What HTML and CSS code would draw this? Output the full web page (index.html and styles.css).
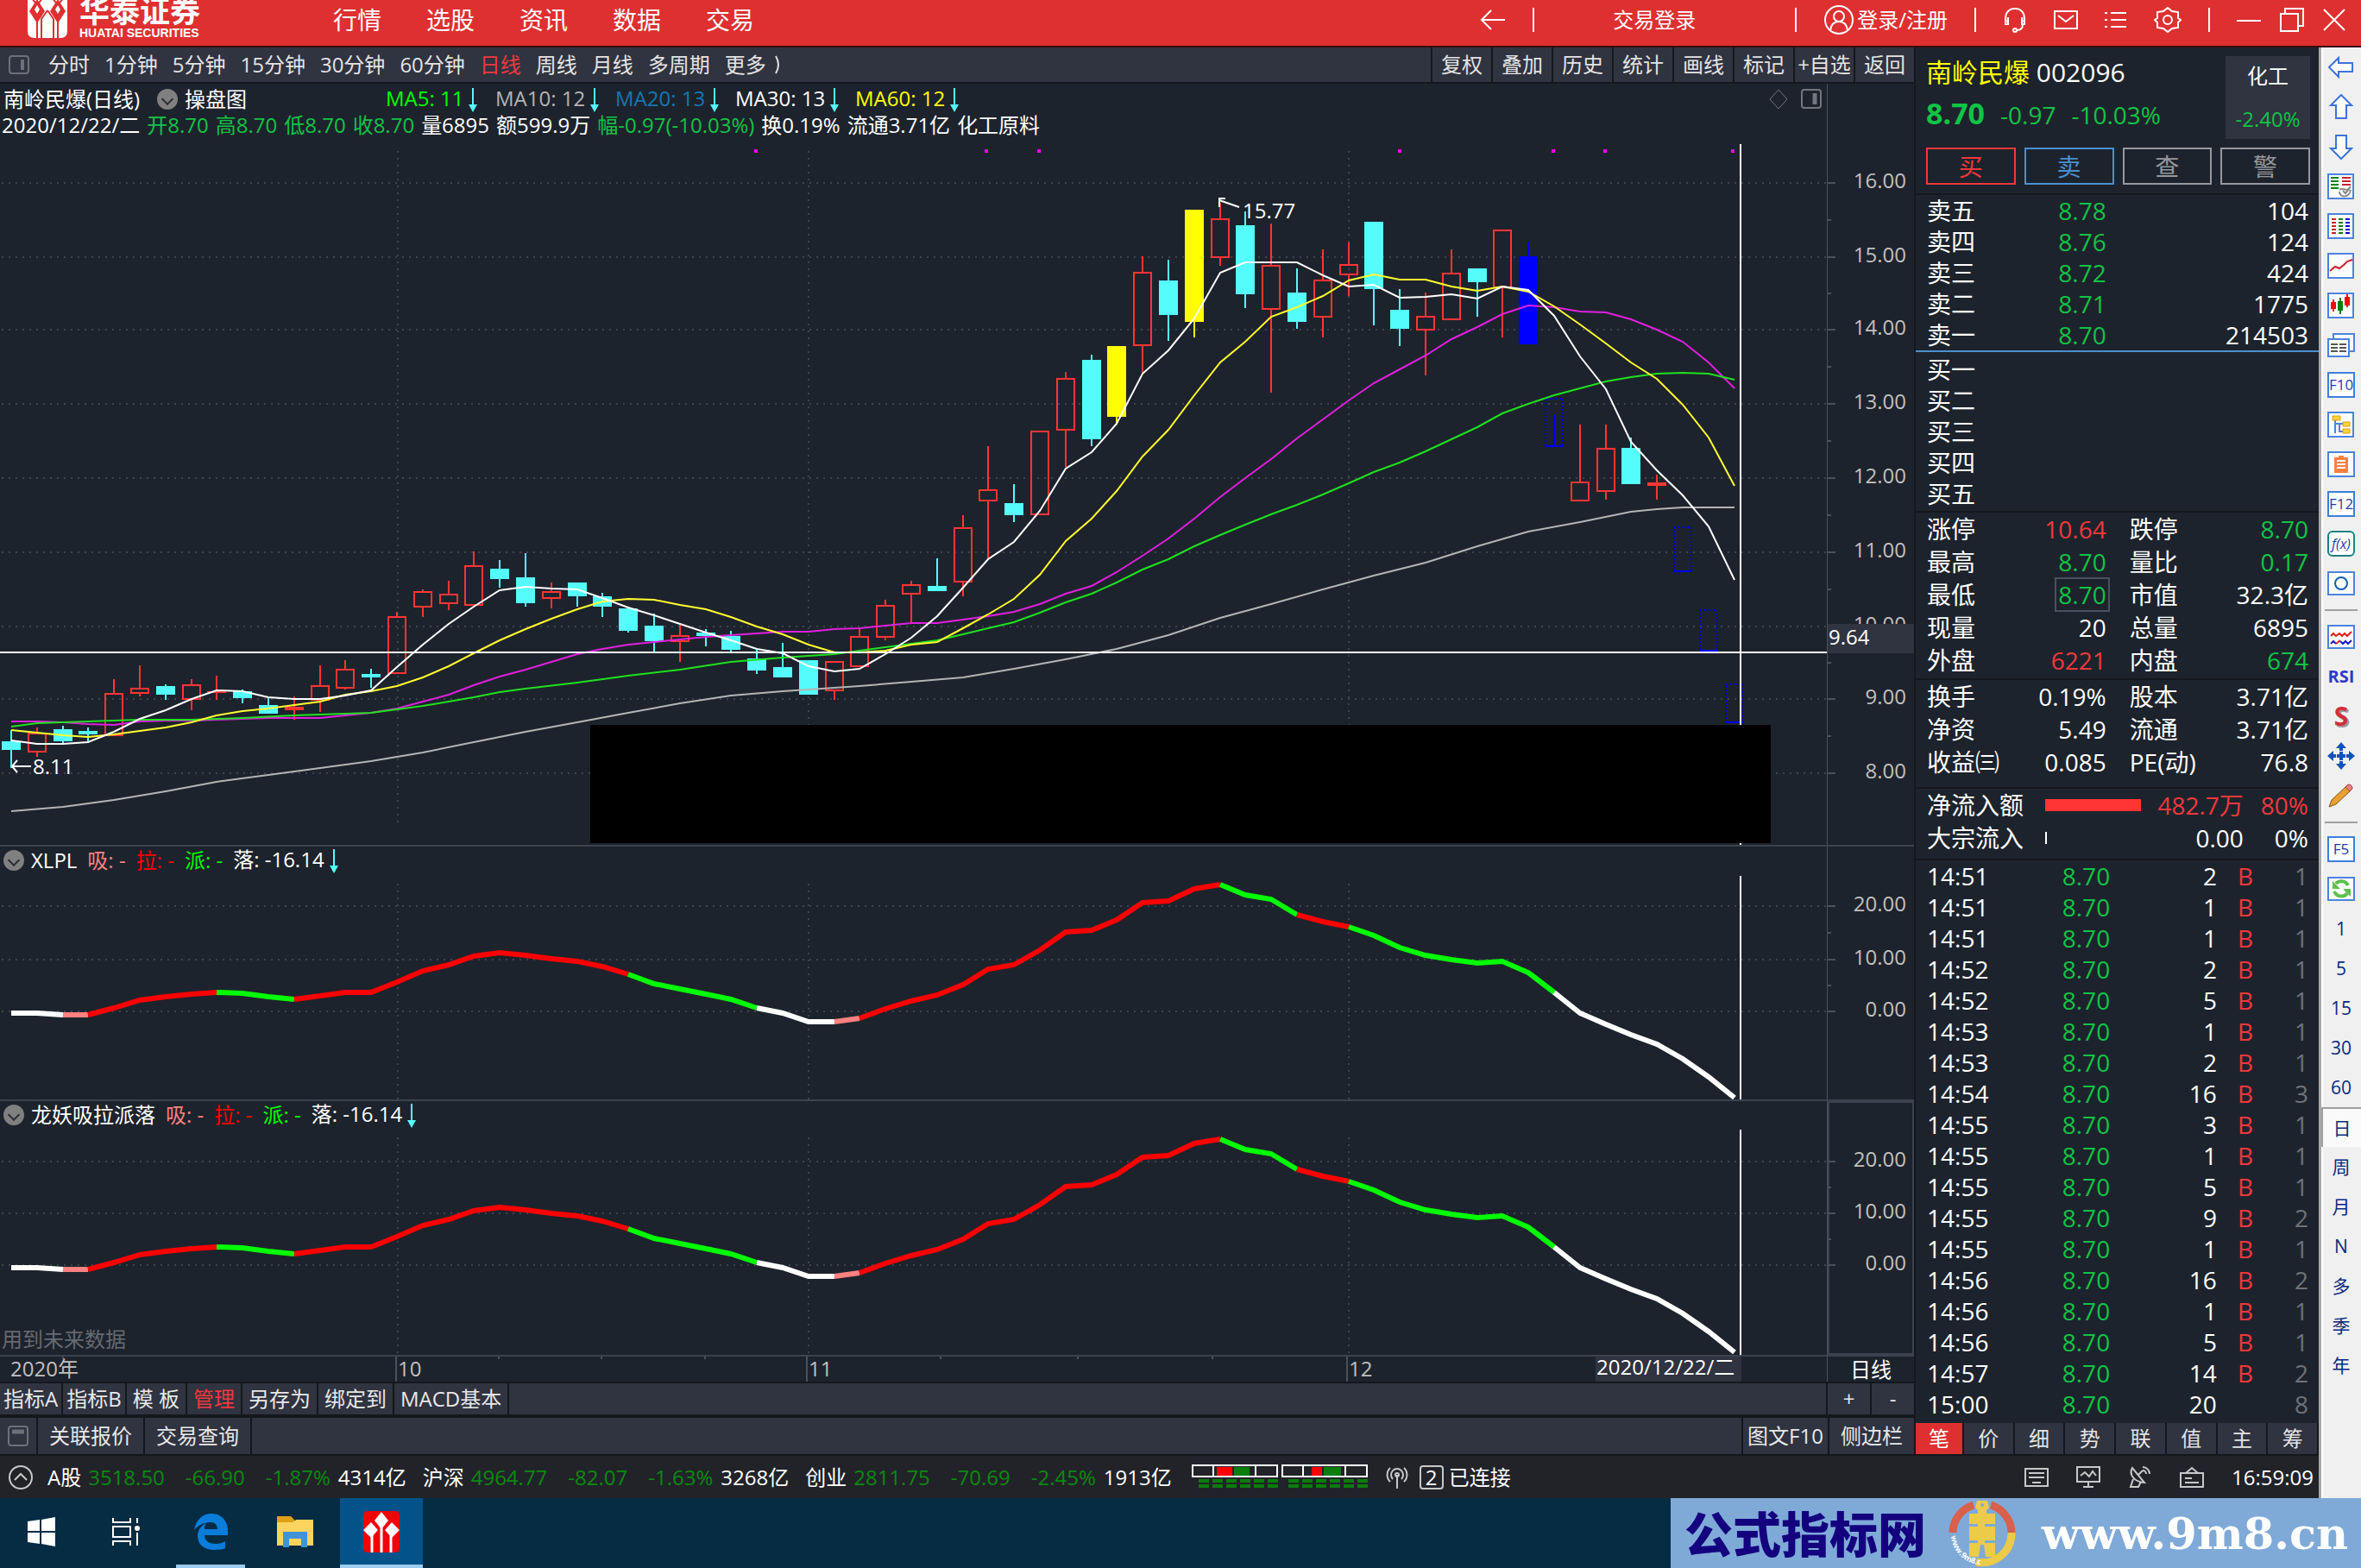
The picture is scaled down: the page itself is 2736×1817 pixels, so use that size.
FILE: index.html
```html
<!DOCTYPE html>
<html lang="zh-CN">
<head>
    <meta charset="UTF-8">
    <meta name="viewport" content="width=device-width, initial-scale=1.0">
    <title>华泰证券 - 南岭民爆 002096</title>
    <link rel="stylesheet" href="styles.css">
</head>
<body>

  <!-- Title Bar -->
  <header class="titlebar">
    <a class="brand" href="#">
      <svg class="brand-logo" width="46" height="46" viewBox="0 0 46 46">
        <path fill="#fff" d="M0 0h46v38q0 8-8 8H8q-8 0-8-8z"/>
        <path fill="#de3031" d="M11 1l9 14-9 14L2 15zM35 1l9 14-9 14-9-14z"/>
        <path stroke="#de3031" stroke-width="2" fill="none" d="M11 27v19M35 27v19M23 14l-7 10v22M23 14l7 10v22M5 0l6 8L17 0M29 0l6 8 6-8"/>
        <path fill="#fff" d="M11 8l3 5-3 5-3-5zM35 8l3 5-3 5-3-5z"/>
      </svg>
      <span class="brand-text">
        <span class="brand-cn">华泰证券</span>
        <span class="brand-en">HUATAI SECURITIES</span>
      </span>
    </a>
    <nav class="main-nav">
      <a href="#">行情</a>
      <a href="#">选股</a>
      <a href="#">资讯</a>
      <a href="#">数据</a>
      <a href="#">交易</a>
    </nav>
    <div class="title-tools">
      <button class="icon-btn" aria-label="后退"><svg width="30" height="26" viewBox="0 0 30 26"><path d="M29 13H3M13 2L2 13l11 11"/></svg></button>
      <i class="sep"></i>
      <button class="trade-login">交易登录</button>
      <i class="sep"></i>
      <button class="user-login">
        <svg width="36" height="36" viewBox="0 0 36 36"><circle cx="18" cy="18" r="16"/><circle cx="18" cy="14" r="6"/><path d="M8 30c1-7 5-10 10-10s9 3 10 10"/></svg>登录/注册
      </button>
      <i class="sep"></i>
      <button class="icon-btn" aria-label="客服"><svg width="28" height="30" viewBox="0 0 28 30"><path d="M4 18C1 7 7 2 14 2s13 5 10 16M3 12v8h3v-8M25 12v8h-3v-8M23 20c0 5-3 7-7 7"/><circle cx="14" cy="27" r="2"/></svg></button>
      <button class="icon-btn" aria-label="邮件"><svg width="28" height="22" viewBox="0 0 28 22"><path d="M1 1h26v20H1zM5 6l9 7 9-7"/></svg></button>
      <button class="icon-btn" aria-label="列表"><svg width="26" height="22" viewBox="0 0 26 22"><path d="M0 3h3M7 3h18M0 11h3M7 11h18M0 19h3M7 19h18"/></svg></button>
      <button class="icon-btn" aria-label="设置"><svg width="32" height="32" viewBox="0 0 32 32"><path d="M16 2l5 4 7 1v7l3 2-3 3v6l-7 1-5 4-5-4-7-1v-6l-3-3 3-2V7l7-1z"/><circle cx="16" cy="16" r="5"/></svg></button>
      <i class="sep"></i>
      <div class="window-btns">
        <button class="icon-btn" aria-label="最小化"><svg width="28" height="26" viewBox="0 0 28 26"><path d="M0 14h28"/></svg></button>
        <button class="icon-btn" aria-label="还原"><svg width="28" height="28" viewBox="0 0 28 28"><path d="M1 7h20v20H1zM6 7V1h21v20h-6"/></svg></button>
        <button class="icon-btn" aria-label="关闭"><svg width="26" height="26" viewBox="0 0 26 26"><path d="M1 1l24 24M25 1L1 25"/></svg></button>
      </div>
    </div>
  </header>

  <main class="app">
    <div class="desk">
      <div class="workspace">

        <!-- Chart Area -->
        <section class="charts">
          <div class="period-bar">
            <svg class="pane-icon" width="24" height="22" viewBox="0 0 24 22"><rect x="1" y="1" width="22" height="20" rx="3"/><path d="M16 5v12" stroke-width="4"/></svg>
            <div class="periods">
              <button>分时</button>
              <button>1分钟</button>
              <button>5分钟</button>
              <button>15分钟</button>
              <button>30分钟</button>
              <button>60分钟</button>
              <button class="active">日线</button>
              <button>周线</button>
              <button>月线</button>
              <button>多周期</button>
              <button class="more">更多<svg width="10" height="22" viewBox="0 0 10 22"><path d="M1 1q6 10 0 20"/></svg></button>
            </div>
            <div class="chart-actions">
              <button>复权</button>
              <button>叠加</button>
              <button>历史</button>
              <button>统计</button>
              <button>画线</button>
              <button>标记</button>
              <button>+自选</button>
              <button>返回</button>
            </div>
          </div>

          <div class="panel">
            <div class="plot">
              <div class="info">
                <div class="info-row">
                  <span class="stock-title">南岭民爆(日线)</span>
                  <button class="fold" aria-label="折叠"></button>
                  <span class="scheme">操盘图</span>
                  <span class="ma lime">MA5: 11<i class="down"></i></span>
                  <span class="ma silver">MA10: 12<i class="down"></i></span>
                  <span class="ma blue">MA20: 13<i class="down"></i></span>
                  <span class="ma">MA30: 13<i class="down"></i></span>
                  <span class="ma yellow">MA60: 12<i class="down"></i></span>
                  <svg class="corner-icons" width="62" height="26" viewBox="0 0 62 26"><path d="M12 2l10 11-10 11L2 13z"/><rect x="39" y="2" width="22" height="21" rx="3" stroke-width="2"/><path d="M54 6v13" stroke-width="5"/></svg>
                </div>
                <div class="info-row quote-line">
                  <span>2020/12/22/二</span>
                  <span class="green">开8.70</span>
                  <span class="green">高8.70</span>
                  <span class="green">低8.70</span>
                  <span class="green">收8.70</span>
                  <span>量6895</span>
                  <span>额599.9万</span>
                  <span class="green">幅-0.97(-10.03%)</span>
                  <span>换0.19%</span>
                  <span>流通3.71亿</span>
                  <span>化工原料</span>
                </div>
              </div>
              <svg class="canvas" id="kline" viewBox="0 160 2117 819"></svg>
            </div>
            <div class="axis"><svg id="klineAxis" viewBox="0 160 100 819"></svg></div>
          </div>

          <div class="panel">
            <div class="plot">
              <div class="info-row ind-head">
                <button class="fold" aria-label="折叠"></button>
                <span>XLPL</span>
                <span class="pink">吸: -</span>
                <span class="pure-red">拉: -</span>
                <span class="lime">派: -</span>
                <span>落: -16.14<i class="down"></i></span>
              </div>
              <svg class="canvas" id="ind1" viewBox="0 1012 2117 262"></svg>
            </div>
            <div class="axis"><svg id="ind1Axis" viewBox="0 1012 100 262"></svg></div>
          </div>

          <div class="panel">
            <div class="plot">
              <div class="info-row ind-head">
                <button class="fold" aria-label="折叠"></button>
                <span>龙妖吸拉派落</span>
                <span class="pink">吸: -</span>
                <span class="pure-red">拉: -</span>
                <span class="lime">派: -</span>
                <span>落: -16.14<i class="down"></i></span>
              </div>
              <svg class="canvas" id="ind2" viewBox="0 1307 2117 263"></svg>
            </div>
            <div class="axis selected"><svg id="ind2Axis" viewBox="0 1307 100 263"></svg></div>
          </div>

          <div class="panel">
            <div class="plot"><svg class="canvas" id="timeAxis" viewBox="0 1572 2117 29"></svg></div>
            <div class="axis cycle">日线</div>
          </div>

          <div class="ind-tabs">
            <button class="tight">指标A</button>
            <button class="tight">指标B</button>
            <button>模 板</button>
            <button class="active">管理</button>
            <button>另存为</button>
            <button>绑定到</button>
            <button>MACD基本</button>
            <div class="zoom-btns"><button>+</button><button>-</button></div>
          </div>
          <div class="link-bar">
            <button class="dock" aria-label="停靠"><svg class="pane-icon" width="24" height="24" viewBox="0 0 24 24"><rect x="1" y="1" width="22" height="22" rx="3"/><path d="M5 7h14" stroke-width="5"/></svg></button>
            <button class="link">关联报价</button>
            <button class="link">交易查询</button>
            <div class="side-btns"><button>图文F10</button><button>侧边栏</button></div>
          </div>
        </section>

        <!-- Quote Panel -->
        <aside class="quote">
          <div class="quote-head">
            <div class="quote-top">
              <div>
                <div class="quote-name"><span class="name">南岭民爆</span> 002096</div>
                <div class="quote-price"><b>8.70</b><span>-0.97</span><span>-10.03%</span></div>
              </div>
              <div class="sector"><span>化工</span><span class="green">-2.40%</span></div>
            </div>
            <div class="quote-btns">
              <button class="buy">买</button>
              <button class="sell">卖</button>
              <button>查</button>
              <button>警</button>
            </div>
          </div>

          <table class="orders asks">
            <tr><td>卖五</td><td class="green">8.78</td><td>104</td></tr>
            <tr><td>卖四</td><td class="green">8.76</td><td>124</td></tr>
            <tr><td>卖三</td><td class="green">8.72</td><td>424</td></tr>
            <tr><td>卖二</td><td class="green">8.71</td><td>1775</td></tr>
            <tr><td>卖一</td><td class="green">8.70</td><td>214503</td></tr>
          </table>
          <table class="orders bids">
            <tr><td>买一</td><td></td><td></td></tr>
            <tr><td>买二</td><td></td><td></td></tr>
            <tr><td>买三</td><td></td><td></td></tr>
            <tr><td>买四</td><td></td><td></td></tr>
            <tr><td>买五</td><td></td><td></td></tr>
          </table>

          <table class="stats">
            <tr><th>涨停</th><td class="red">10.64</td><th>跌停</th><td class="green">8.70</td></tr>
            <tr><th>最高</th><td class="green">8.70</td><th>量比</th><td class="green">0.17</td></tr>
            <tr><th>最低</th><td class="green"><span class="boxed">8.70</span></td><th>市值</th><td>32.3亿</td></tr>
            <tr><th>现量</th><td>20</td><th>总量</th><td>6895</td></tr>
            <tr><th>外盘</th><td class="red">6221</td><th>内盘</th><td class="green">674</td></tr>
          </table>
          <table class="stats extra">
            <tr><th>换手</th><td>0.19%</td><th>股本</th><td>3.71亿</td></tr>
            <tr><th>净资</th><td>5.49</td><th>流通</th><td>3.71亿</td></tr>
            <tr><th>收益㈢</th><td>0.085</td><th>PE(动)</th><td>76.8</td></tr>
          </table>

          <table class="flow">
            <tr class="red"><th>净流入额</th><td><i class="flow-bar"></i></td><td>482.7万</td><td>80%</td></tr>
            <tr><th>大宗流入</th><td><i class="flow-bar none"></i></td><td>0.00</td><td>0%</td></tr>
          </table>

          <table class="ticks">
            <tbody id="ticks"></tbody>
          </table>

          <div class="quote-tabs">
            <button class="active">笔</button>
            <button>价</button>
            <button>细</button>
            <button>势</button>
            <button>联</button>
            <button>值</button>
            <button>主</button>
            <button>筹</button>
          </div>
        </aside>
      </div>

      <!-- Status Bar -->
      <footer class="status">
        <svg class="status-up" width="30" height="30" viewBox="0 0 30 30"><circle cx="15" cy="15" r="13"/><path d="M8 18l7-7 7 7"/></svg>
        <div class="idx"><span>A股</span><em>3518.50</em><em>-66.90</em><em>-1.87%</em><span>4314亿</span></div>
        <div class="idx"><span>沪深</span><em>4964.77</em><em>-82.07</em><em>-1.63%</em><span>3268亿</span></div>
        <div class="idx"><span>创业</span><em>2811.75</em><em>-70.69</em><em>-2.45%</em><span>1913亿</span></div>
        <svg class="gauge" width="206" height="30" viewBox="0 0 206 30">
          <path fill="#f00" d="M29 3h18v10H29zM139 3h12v10h-12z"/>
          <path fill="#0a7d0a" d="M49 3h18v10H49zM153 3h20v10h-20z"/>
          <path fill="none" stroke="#fff" stroke-width="2" d="M1 1h98v13H1zM25 1v13M74 1v13M105 1h98v13h-98zM129 1v13M178 1v13"/>
          <path stroke="#0a7d0a" stroke-width="4" stroke-dasharray="12 4" d="M8 19h92M8 25h92M112 19h92M112 25h92"/>
        </svg>
        <svg class="antenna" width="28" height="28" viewBox="0 0 28 28"><path d="M14 11v16M9 16a7 7 0 1 1 10 0M6 19a11 11 0 0 1 0-16M22 19a11 11 0 0 0 0-16"/><circle cx="14" cy="11" r="2"/></svg>
        <span class="conn-no">2</span>
        <span>已连接</span>
        <div class="status-right">
          <svg width="28" height="24" viewBox="0 0 28 24"><path d="M1 2h26v20H1zM5 7h18M5 12h18M9 18h10"/></svg>
          <svg width="28" height="26" viewBox="0 0 28 26"><path d="M1 1h26v17H1zM5 11l5-4 5 5 4-6 4 5M14 18v6M8 24h12"/></svg>
          <svg width="28" height="26" viewBox="0 0 28 26"><path d="M5 2C1 9 6 18 19 19zM6 15l-3 9h9l3-6M12 10l5-5M17 5a4 4 0 0 1 4 4M17 1a8 8 0 0 1 8 8"/></svg>
          <svg width="28" height="26" viewBox="0 0 28 26"><path d="M1 8h26v16H1zM7 8l7-6 7 6M6 14h8M6 19h16"/></svg>
          <span>16:59:09</span>
        </div>
      </footer>
    </div>

    <!-- Tool Strip -->
    <div class="strip">
      <button><svg width="32" height="32" viewBox="0 0 32 32"><path class="arrow" d="M2 16L13 5v6h16v10H13v6z"/></svg></button>
      <button><svg width="32" height="32" viewBox="0 0 32 32"><path class="arrow" d="M16 2l12 12h-6v15H10V14H4z"/></svg></button>
      <button><svg width="32" height="32" viewBox="0 0 32 32"><path class="arrow" d="M16 30L4 18h6V3h12v15h6z"/></svg></button>
      <button><svg width="32" height="32" viewBox="0 0 32 32"><path class="frame" d="M1 2h29v28H1z"/><path stroke="#0a7d0a" stroke-width="2" d="M4 6h9M4 10h9M4 14h9M4 18h9"/><path stroke="#c8202a" stroke-width="2" d="M17 6h10M17 10h10M17 14h10"/><path fill="none" stroke="#888" stroke-width="2" d="M14 20c4-4 8 4 13-4M14 22c0 8 12 7 13-2M18 21l3 3 5-6"/></svg></button>
      <button><svg width="32" height="32" viewBox="0 0 32 32"><path class="frame" d="M1 2h29v28H1z"/><path stroke="#c8202a" stroke-width="2" d="M5 8h5M5 12h5M5 16h5M5 20h5M5 24h5"/><path stroke="#0a7d0a" stroke-width="2" d="M13 8h5M13 12h5M13 16h5M13 20h5M13 24h5"/><path stroke="#0000c8" stroke-width="2" d="M21 8h5M21 12h5M21 16h5M21 20h5M21 24h5"/></svg></button>
      <button><svg width="32" height="32" viewBox="0 0 32 32"><path class="frame" d="M1 2h29v28H1z"/><path fill="none" stroke="#c8202a" stroke-width="2" d="M3 22l6-5 5 2 5-4 4-4 6-2"/></svg></button>
      <button><svg width="32" height="32" viewBox="0 0 32 32"><path class="frame" d="M1 2h29v28H1z"/><path fill="#f00" d="M4 12h6v8H4zM6 9h2v14H6zM20 6h6v10h-6zM22 3h2v15h-2z"/><path fill="#0a7d0a" d="M12 11h6v11h-6zM14 7h2v19h-2z"/></svg></button>
      <button><svg width="32" height="32" viewBox="0 0 32 32"><path class="frame" d="M7 3h24v20H7z"/><path class="frame" d="M1 9h24v20H1z"/><path stroke="#555" stroke-width="2" d="M4 15h8M14 15h8M4 19h8M14 19h8M4 23h8M14 23h8"/></svg></button>
      <button class="key">F10</button>
      <button><svg width="32" height="32" viewBox="0 0 32 32"><path class="frame" d="M1 2h29v28H1z"/><path fill="none" stroke="#4a84e0" stroke-width="2" d="M9 9v17M9 15h9M14 15v9h5"/><path fill="#ffd23c" stroke="#d8a010" d="M6 6h9v5H6zM18 13h8v5h-8zM18 21h8v5h-8z"/></svg></button>
      <button><svg width="32" height="32" viewBox="0 0 32 32"><path class="frame" stroke="#1886d0" d="M1 2h30v28H1z"/><path fill="#ff8040" d="M8 8h5V6h6v2h5v18H8z"/><path stroke="#fff" stroke-width="2" d="M11 12h10M11 16h10M11 20h10"/></svg></button>
      <button class="key">F12</button>
      <button class="key fx">f(x)</button>
      <button><svg width="32" height="32" viewBox="0 0 32 32"><path class="frame" d="M1 3h30v26H1z"/><circle cx="16" cy="16" r="7" fill="none" stroke="#1060b0" stroke-width="2"/></svg></button>
      <hr>
      <button><svg width="32" height="32" viewBox="0 0 32 32"><path class="frame" d="M1 3h30v26H1z"/><path fill="none" stroke="#e02020" stroke-width="2" d="M4 15l3-3 3 3 4-3 3 3 3-3 3 3 5-5M10 24l5-4"/><path fill="none" stroke="#2020c0" stroke-width="2" d="M4 24l3-3 3 3M15 21l3 3 3-3 3 3 4-4"/></svg></button>
      <button class="rsi">RSI</button>
      <button class="dollar">S</button>
      <button><svg width="32" height="32" viewBox="0 0 32 32"><path fill="#1452b8" d="M16 0l6 7h-4v3h-4V7h-4zM16 32l-6-7h4v-3h4v3h4zM0 16l7-6v4h3v4H7v4zM32 16l-7 6v-4h-3v-4h3v-4zM14 11h4v3h3v4h-3v3h-4v-3h-3v-4h3z"/></svg></button>
      <button><svg width="32" height="32" viewBox="0 0 32 32"><path fill="#e8a030" stroke="#805020" d="M2 29l3-8L21 6l5 5-16 15z"/><path fill="#f08080" stroke="#a04040" d="M21 6l3-3q5 0 5 5l-3 3z"/></svg></button>
      <hr>
      <button class="key">F5</button>
      <button><svg width="32" height="32" viewBox="0 0 32 32"><path class="frame" d="M1 3h30v26H1z"/><path fill="none" stroke="#5cc04c" stroke-width="4" d="M24 12c-3-6-11-6-14-2M8 19c3 7 12 7 15 2"/><path fill="#5cc04c" d="M6 7v9h9zM27 25v-9h-9z"/></svg></button>
      <button>1</button>
      <button>5</button>
      <button>15</button>
      <button>30</button>
      <button>60</button>
      <button class="pressed">日</button>
      <button>周</button>
      <button>月</button>
      <button>N</button>
      <button>多</button>
      <button>季</button>
      <button>年</button>
    </div>
  </main>

  <!-- Taskbar -->
  <div class="taskbar">
    <button class="task" aria-label="开始"><svg width="32" height="34" viewBox="0 0 32 34"><path fill="#fff" d="M0 5l14-2v13H0zM16 3l16-3v16H16zM0 18h14v13L0 29zM16 18h16v16l-16-3z"/></svg></button>
    <button class="task" aria-label="任务视图"><svg width="32" height="32" viewBox="0 0 32 32"><path fill="none" stroke="#fff" stroke-width="2" d="M1 0v5h20V0M1 32v-5h20v5M1 10h20v12H1zM29 0v6M29 17v15"/><circle cx="29" cy="12" r="3" fill="#fff"/></svg></button>
    <button class="task open" aria-label="Edge"><svg width="40" height="42" viewBox="0 0 40 42"><path fill="#0a7ddb" d="M1 19C3 7 11 0 21 0c12 0 19 9 19 20v5H13c0 7 6 10 13 10 4 0 8-1 11-3v8c-4 2-8 2-13 2C12 42 5 35 5 26c0-7 4-12 10-15-2 2-2 5-2 7h15c0-5-3-8-8-8C12 10 5 14 1 19z"/></svg></button>
    <button class="task" aria-label="文件资源管理器"><svg width="42" height="36" viewBox="0 0 42 36"><path fill="#dfa010" d="M0 0h16l4 4v6H0z"/><path fill="#fbd35f" d="M0 7h18l4-3h20v30H0z"/><path fill="#3f94d8" d="M7 18h28v18h-7V26H14v10H7z"/></svg></button>
    <button class="task current" aria-label="华泰证券"><svg width="42" height="48" viewBox="0 0 42 48"><rect width="42" height="48" rx="5" fill="#f20008"/><path fill="#fff" d="M21 1l8 10-8 10-8-10zM9 13l8 9-8 9-9-9zM33 13l9 9-9 9-8-9z"/><path stroke="#fff" stroke-width="3" d="M21 18v30M10 28v20M32 28v20"/></svg></button>
    <div class="site">
      <span class="site-cn">公式指标网</span>
      <svg width="78" height="78" viewBox="0 0 78 78">
        <g fill="none" stroke-width="9"><path stroke="#d8604c" d="M5 38A34 34 0 0 1 29 6M49 6A34 34 0 0 1 73 38"/><path stroke="#ecca4a" d="M73 38A34 34 0 0 1 32 72"/></g>
        <path fill="#ecca4a" d="M33 1h12l2 8-3 3v4h10v12H42v3h12v16H42v3h12v16H43l-2-14h-4l-2 14H24V50h10v-3H24V31h10v-3H24V16h10v-4l-3-3z"/>
        <circle cx="39" cy="6" r="2" fill="#7faad8"/>
        <path id="ring" fill="none" d="M3 42A36 36 0 0 0 36 75"/>
        <text class="ring-text"><textPath href="#ring">www.9m8.cn</textPath></text>
      </svg>
      <span class="site-url">www.9m8.cn</span>
    </div>
  </div>

  <script src="script.js"></script>
</body>
</html>
```
FILE: styles.css
```css
/* General Page Styling */
* {
  box-sizing: border-box;
}

body {
  font-family: "Open Sans", "Noto Sans CJK SC", sans-serif;
  font-size: 24px;
  line-height: 30px;
  color: #fff;
  background-color: #1d232c;
  margin: 0;
  min-height: 100vh;
  display: flex;
  flex-direction: column;
}

button {
  font: inherit;
  color: inherit;
  background: none;
  border: none;
  padding: 0;
  white-space: nowrap;
}

a {
  color: inherit;
  text-decoration: none;
}

svg {
  display: block;
}

table {
  width: 100%;
  table-layout: fixed;
  border-collapse: collapse;
}

td,
th {
  padding: 0;
  font-weight: normal;
  text-align: right;
  white-space: nowrap;
}

th,
td:first-child {
  text-align: left;
}

/* Colours */
.green { color: #12c446; }
.red td { color: #f0383c; }
td.red { color: #f0383c; }
.lime { color: #00ff00; }
.silver { color: #b4b4b4; }
.blue { color: #1478b4; }
.yellow { color: #ffff00; }
.pink { color: #ff8080; }
.pure-red { color: #ff0000; }

/* Title Bar */
.titlebar {
  height: 55px;
  display: flex;
  align-items: center;
  background-color: #de3031;
  border-bottom: 2px solid #3a0c10;
  padding: 0 18px 8px 32px;
  overflow: hidden;
}

.brand {
  display: flex;
  gap: 14px;
  width: 354px;
}

.brand-text {
  display: flex;
  flex-direction: column;
}

.brand-cn {
  font-size: 35px;
  font-weight: bold;
  line-height: 30px;
}

.brand-en {
  font-family: "Liberation Sans", sans-serif;
  font-size: 14px;
  line-height: 20px;
  font-weight: bold;
}

.main-nav {
  display: flex;
  gap: 52px;
  font-size: 28px;
}

.title-tools {
  margin-left: auto;
  display: flex;
  align-items: center;
  gap: 31px;
}

.title-tools svg {
  fill: none;
  stroke: #fff;
  stroke-width: 2;
}

.sep {
  width: 2px;
  height: 28px;
  background-color: #fff;
}

.trade-login {
  margin: 0 84px 0 60px;
}

.user-login {
  display: flex;
  align-items: center;
  gap: 3px;
}

.window-btns {
  display: flex;
  align-items: center;
  gap: 22px;
}

/* Page Frame */
.app {
  flex: 1;
  display: flex;
}

.desk {
  flex: 1;
  display: flex;
  flex-direction: column;
}

.workspace {
  display: flex;
  border-bottom: 2px solid #14171d;
}

.charts {
  flex: 1;
}

/* Period Bar */
.period-bar {
  height: 42px;
  display: flex;
  align-items: center;
  background-color: #303340;
  border-bottom: 2px solid #14171d;
  padding-left: 10px;
  color: #e4e4e4;
}

.pane-icon {
  fill: none;
  stroke: #6e7078;
  stroke-width: 2;
}

.periods {
  display: flex;
  gap: 17px;
  margin-left: 22px;
}

.active {
  color: #f0383c;
}

.more {
  display: flex;
  align-items: center;
  gap: 10px;
}

.more svg {
  fill: none;
  stroke: #e4e4e4;
  stroke-width: 2;
}

.chart-actions {
  display: flex;
  margin-left: auto;
  align-self: stretch;
}

.chart-actions button {
  width: 70px;
  border-left: 2px solid #14171d;
}

/* Chart Panels */
.panel {
  display: flex;
  border-top: 2px solid #3a4350;
}

.period-bar + .panel {
  border-top: none;
}

.plot {
  flex: 1;
  min-width: 0;
}

.canvas {
  width: 100%;
  height: auto;
  overflow: visible;
}

.axis {
  width: 101px;
  border-left: 1px solid #4a505c;
  display: flex;
  align-items: flex-end;
}

.axis svg {
  width: 100%;
}

.axis.selected {
  box-shadow: inset 0 0 0 2px #3a4350;
}

.axis.cycle {
  align-items: center;
  justify-content: center;
  line-height: 28px;
}

.info {
  height: 63px;
  padding-top: 2px;
}

.info-row {
  height: 31px;
  display: flex;
  align-items: center;
  padding-left: 4px;
  white-space: nowrap;
}

.stock-title {
  width: 178px;
}

.info-row.quote-line {
  gap: 8px;
  height: 30px;
  padding-left: 2px;
}

.fold {
  width: 24px;
  height: 24px;
  border-radius: 50%;
  background-color: #808080;
  display: flex;
  justify-content: center;
  align-items: center;
}

.fold::after {
  content: "";
  width: 8px;
  height: 8px;
  border: solid #2a2d34;
  border-width: 0 2px 2px 0;
  transform: rotate(45deg);
}

.scheme {
  width: 233px;
  margin-left: 8px;
}

.ma {
  min-width: 139px;
}

.ma.lime {
  min-width: 127px;
}

/* Falling arrow after an indicator value */
.down {
  display: inline-block;
  width: 10px;
  height: 28px;
  margin-left: 6px;
  vertical-align: middle;
  background: linear-gradient(#54fcfc, #54fcfc) center top / 2px 24px no-repeat;
  position: relative;
}

.down::after {
  content: "";
  position: absolute;
  left: 0;
  bottom: 0;
  border: 5px solid transparent;
  border-top: 9px solid #54fcfc;
  border-bottom: none;
}

.corner-icons {
  margin-left: auto;
  margin-right: 6px;
  fill: none;
  stroke: #73767d;
}

.ind-head {
  gap: 12px;
}

.ind-head .fold + span {
  margin-left: -4px;
}

/* Chart Drawing */
.grid-line {
  stroke: #3c444f;
  stroke-width: 2;
  stroke-dasharray: 2 6;
}

.axis-tick {
  stroke: #4a505c;
  stroke-width: 2;
}

.canvas text,
.axis text {
  fill: #c0c0c0;
  font-size: 24px;
}

.canvas text.mark,
.axis text.mark {
  fill: #fff;
}

.canvas text.note {
  fill: #666a70;
}

.cross {
  stroke: #fff;
  stroke-width: 2;
}

.curve {
  fill: none;
  stroke-width: 2;
}

.ribbon {
  fill: none;
  stroke-width: 6;
}

/* Bottom Bars */
.ind-tabs,
.link-bar {
  display: flex;
  background-color: #303340;
  border-top: 2px solid #14171d;
  color: #e8e8e8;
}

.ind-tabs {
  height: 38px;
}

.ind-tabs button {
  padding: 0 7px;
  border-right: 2px solid #14171d;
}

.ind-tabs .tight {
  padding: 0 4px;
}

.link-bar {
  height: 46px;
  border-top-width: 4px;
}

.link-bar button {
  border-right: 2px solid #14171d;
}

.link-bar .dock {
  padding: 0 9px;
}

.link-bar .link {
  padding: 0 13px;
}

.zoom-btns,
.side-btns {
  margin-left: auto;
  display: flex;
}

.zoom-btns button {
  width: 51px;
  padding: 0;
  border-right: none;
  border-left: 2px solid #14171d;
}

.side-btns button {
  width: 100px;
  border-right: none;
  border-left: 2px solid #14171d;
}

/* Quote Panel */
.quote {
  width: 469px;
  border-left: 2px solid #14171d;
  font-size: 28px;
  display: flex;
  flex-direction: column;
}

.quote-head {
  height: 169px;
  padding: 10px 10px 8px 12px;
}

.quote-top {
  display: flex;
  justify-content: space-between;
}

.quote-name {
  font-size: 30px;
  line-height: 38px;
}

.name {
  color: #ffff00;
}

.quote-price {
  display: flex;
  align-items: baseline;
  gap: 18px;
  margin-top: 9px;
  line-height: 38px;
  color: #12c446;
}

.quote-price b {
  font-size: 34px;
}

.sector {
  width: 98px;
  height: 96px;
  background-color: #303340;
  display: flex;
  flex-direction: column;
  justify-content: space-between;
  align-items: center;
  padding: 8px 0;
  font-size: 24px;
}

.quote-btns {
  display: flex;
  gap: 10px;
  margin-top: 10px;
}

.quote-btns button {
  flex: 1;
  height: 43px;
  border: 2px solid #96989d;
  color: #96989d;
}

.quote-btns .buy {
  border-color: #f0383c;
  color: #f0383c;
}

.quote-btns .sell {
  border-color: #4a90d0;
  color: #4a90d0;
}

.quote table {
  border-top: 2px solid #14171d;
  border-collapse: separate;
  border-spacing: 0;
  padding: 0 12px 0 13px;
}

.quote .orders {
  line-height: 36px;
}

.orders td:first-child {
  width: 22%;
}

.orders td:nth-child(2) {
  width: 25%;
}

.quote .bids {
  border-top-color: #4a90d0;
  padding-top: 2px;
  padding-bottom: 2px;
}

.quote .stats,
.quote .flow {
  line-height: 38px;
}

.quote .stats {
  padding-bottom: 2px;
}

.stats th {
  width: 22%;
}

.stats td:nth-child(2) {
  width: 25%;
}

.stats th:nth-child(3) {
  width: 29%;
  padding-left: 27px;
}

.quote .extra {
  padding-bottom: 10px;
}

.boxed {
  outline: 2px solid #4a5060;
  outline-offset: 2px;
  display: inline-block;
  line-height: 32px;
}

.quote .flow {
  padding-bottom: 5px;
}

.flow th {
  width: 31%;
}

.flow td:nth-child(2) {
  width: 25%;
}

.flow td:nth-child(3) {
  width: 27%;
}

.flow-bar {
  display: block;
  width: 100%;
  height: 14px;
  background-color: #ff3434;
}

.flow-bar.none {
  width: 2px;
  background-color: #fff;
}

.quote .ticks {
  line-height: 36px;
}

.ticks td:nth-child(1) { width: 20%; }
.ticks td:nth-child(2) { width: 28%; }
.ticks td:nth-child(3) { width: 28%; }
.ticks td:nth-child(4) { width: 15%; text-align: center; color: #f0383c; }
.ticks td:nth-child(5) { color: #6e7278; }

.quote-tabs {
  display: flex;
  gap: 2px;
  margin-top: auto;
  height: 36px;
  font-size: 24px;
  background-color: #14171d;
  padding-right: 2px;
}

.quote-tabs button {
  flex: 1;
  background-color: #303340;
  color: #e4e4e4;
}

.quote-tabs .active {
  flex: 0 0 54px;
  background-color: #de3031;
  color: #fff;
}

/* Status Bar */
.status {
  flex: 1;
  min-height: 49px;
  display: flex;
  align-items: center;
  background-color: #212329;
  padding: 0 6px 0 9px;
  white-space: nowrap;
}

.status svg {
  fill: none;
  stroke: #c8c8c8;
  stroke-width: 2;
}

.status .gauge {
  stroke: none;
  margin-left: 4px;
}

.status-up {
  margin-right: 16px;
}

.idx {
  display: flex;
  gap: 8px;
  margin-right: 19px;
}

.idx em {
  font-style: normal;
  color: #0b8a10;
}

.idx em + em {
  margin-left: 16px;
}

.idx em + span {
  margin-left: 1px;
}

.antenna {
  margin-left: 18px;
}

.conn-no {
  width: 28px;
  border: 2px solid #c8c8c8;
  border-radius: 4px;
  line-height: 24px;
  text-align: center;
  margin: 0 6px 0 12px;
}

.status-right {
  margin-left: auto;
  display: flex;
  align-items: center;
  gap: 32px;
}

/* Tool Strip */
.strip {
  width: 49px;
  background-color: #f0f0f0;
  border-left: 3px solid #a8a8a8;
  box-shadow: inset 2px 0 0 #fff;
  display: flex;
  flex-direction: column;
  color: #0a2a80;
  font-size: 21px;
}

.strip button {
  height: 46px;
  display: flex;
  align-items: center;
  justify-content: center;
}

.strip hr {
  width: 38px;
  height: 2px;
  margin: 7px auto;
  border: none;
  background-color: #a0a0a0;
}

.arrow {
  fill: #fff;
  stroke: #3c74d8;
  stroke-width: 2;
}

.frame {
  fill: #fff;
  stroke: #4a84e0;
  stroke-width: 2;
}

.strip .key {
  height: 30px;
  width: 32px;
  margin: 8px auto;
  background-color: #fff;
  border: 2px solid #3c80dc;
  font-size: 17px;
  color: #1c3cb0;
}

.strip .fx {
  border-color: #1c8080;
  border-radius: 6px;
  font-size: 16px;
  font-style: italic;
}

.strip .rsi {
  font-size: 20px;
  font-weight: bold;
  color: #3038c8;
}

.strip .dollar {
  font-size: 30px;
  font-weight: bold;
  color: #d03038;
  text-shadow: 2px 2px 0 #999;
}

.strip .pressed {
  background-color: #fafafa;
  border: solid #a0a0a0;
  border-width: 2px 0 0 2px;
}

/* Taskbar */
.taskbar {
  height: 81px;
  display: flex;
  background-color: #052c43;
}

.task {
  width: 80px;
  margin-left: 12px;
  display: flex;
  align-items: center;
  justify-content: center;
  border-bottom: 4px solid transparent;
}

.task + .task {
  margin-left: 18px;
}

.task:first-child {
  margin-left: 8px;
}

.task.open {
  border-bottom-color: #9ccbf0;
}

.task + .task.current {
  width: 96px;
  margin-left: 12px;
  background-color: #03538a;
  border-bottom-color: #9ccbf0;
}

.site {
  margin-left: auto;
  width: 800px;
  display: flex;
  align-items: center;
  background-color: #7faad8;
  padding-left: 16px;
}

.site-cn {
  font-size: 56px;
  font-weight: 900;
  color: #14007f;
  margin-right: 26px;
}

.ring-text {
  fill: #fff;
  font-size: 9px;
  font-weight: bold;
}

.site-url {
  font-family: "DejaVu Serif", serif;
  font-size: 51px;
  font-weight: bold;
  margin-left: 30px;
}
```
FILE: script.js
```js
const NS = 'http://www.w3.org/2000/svg';

const COLORS = { r: '#ff3434', c: '#54fcfc', y: '#ffff00', b: '#0000ff' };
const FIRST_X = 13;
const STEP = 29.8;
const BODY = 22;

// type, high, body top, body bottom, low
// r hollow red, R solid red, c cyan, y yellow, b blue, h hollow blue
const candles = [
  ['c', 846, 859, 869, 890], ['r', 843, 850, 871, 877], ['c', 841, 845, 859, 861], ['c', 843, 847, 851, 861],
  ['r', 787, 804, 852, 852], ['r', 771, 798, 803, 807], ['c', 793, 795, 805, 811], ['r', 787, 794, 810, 823],
  ['R', 783, 801, 803, 811], ['c', 799, 801, 809, 815], ['c', 809, 817, 827, 827], ['R', 807, 819, 823, 834],
  ['r', 771, 795, 811, 825], ['r', 765, 776, 797, 799], ['c', 775, 781, 785, 797], ['r', 709, 715, 780, 780],
  ['r', 683, 686, 703, 715], ['r', 673, 689, 699, 707], ['r', 639, 656, 701, 701], ['c', 649, 659, 671, 681],
  ['c', 641, 669, 699, 703], ['r', 675, 686, 693, 705], ['c', 675, 675, 691, 703], ['c', 687, 691, 703, 715],
  ['c', 705, 705, 731, 733], ['c', 711, 725, 743, 755], ['r', 723, 737, 743, 767], ['c', 729, 733, 737, 749],
  ['c', 731, 737, 753, 757], ['c', 753, 763, 777, 781], ['c', 745, 773, 785, 785], ['c', 765, 765, 805, 805],
  ['r', 767, 767, 800, 811], ['r', 728, 738, 772, 772], ['r', 695, 702, 738, 742], ['r', 673, 678, 688, 722],
  ['c', 647, 679, 685, 685], ['r', 597, 612, 674, 691], ['r', 517, 568, 580, 648], ['c', 561, 583, 597, 605],
  ['r', 500, 500, 596, 596], ['r', 431, 439, 498, 541], ['c', 411, 417, 509, 517], ['y', 401, 401, 483, 492],
  ['r', 297, 316, 400, 433], ['c', 301, 325, 365, 395], ['y', 243, 243, 373, 391], ['r', 235, 254, 298, 308],
  ['c', 245, 261, 341, 357], ['r', 259, 308, 358, 455], ['c', 311, 339, 373, 381], ['r', 289, 325, 367, 391],
  ['r', 281, 307, 318, 343], ['c', 257, 257, 335, 377], ['c', 335, 359, 381, 401], ['r', 339, 367, 382, 435],
  ['r', 289, 317, 370, 370], ['c', 311, 311, 327, 367], ['r', 267, 267, 333, 391], ['b', 280, 297, 399, 399],
  ['h', 462, 462, 517, 517], ['r', 492, 559, 580, 580], ['r', 492, 520, 569, 579], ['c', 507, 519, 561, 561],
  ['R', 550, 559, 563, 579], ['h', 611, 611, 662, 662], ['h', 707, 707, 754, 754], ['h', 793, 793, 837, 837]
];

const _ = null;
const averages = [
  ['#b4b4b4', [940, _, 935, _, 927, _, 917, _, 906, _, 898, _, 890, _, 882, _, 872, _, 860, _, 848, _, 837, _, 826, _, 815, _, 806, _, 801, 799, 797, 795, _, 790, _, 785, _, 775, _, 764, _, 752, _, 736, _, 716, _, 700, _, 683, _, 667, _, 652, _, 633, _, 616, _, 605, _, 593, 590, 588, 588, 588]],
  ['#e020e0', [836, 836, 837, 839, 840, 836, 835, 835, 834, 833, 832, 832, 832, 829, 826, 821, 813, 805, 794, 784, 776, 767, 758, 752, 747, 744, 741, 738, 736, 734, 732, 732, 729, 728, 725, 722, 722, 718, 714, 709, 700, 688, 679, 663, 644, 624, 601, 576, 554, 532, 508, 486, 464, 444, 428, 412, 393, 379, 364, 354, 356, 361, 362, 370, 382, 396, 420, 450]],
  ['#20e020', [842, 838, _, 836, _, 834, _, 834, 833, 832, _, 829, 828, 827, 826, 822, 818, 813, 808, 802, 798, _, 791, _, 783, _, 776, _, 767, _, 762, _, 758, 754, 750, _, 742, 735, 728, 721, 710, 698, 688, 675, 660, 648, 633, 620, 608, 596, 585, 573, 560, 547, 536, 523, 509, 495, 479, 468, 458, 450, 442, 437, 433, 432, 433, 440]],
  ['#ffff30', [846, 849, 852, 854, 851, 847, 843, 837, 829, 824, 821, 817, 813, 805, 801, 795, 785, 772, 757, 742, 729, 717, 706, 697, 694, 695, 701, 706, 715, 726, 735, 747, 756, 756, 754, 747, 744, 728, 712, 694, 666, 627, 601, 569, 529, 498, 458, 420, 396, 367, 356, 343, 325, 318, 324, 324, 332, 337, 332, 338, 355, 376, 398, 420, 439, 469, 507, 563]],
  ['#ffffff', [858, 862, 862, 860, 848, 833, 823, 810, 800, 801, 808, 810, 810, 806, 800, 773, 747, 723, 703, 684, 680, 682, 683, 693, 704, 713, 723, 733, 742, 752, 757, 772, 778, 775, 758, 739, 714, 681, 648, 628, 592, 543, 524, 491, 433, 406, 369, 316, 304, 304, 304, 319, 332, 330, 345, 344, 341, 346, 332, 336, 366, 413, 451, 512, 545, 574, 610, 672]]
];

const ribbon = [1174, 1174, 1176, 1176, 1168, 1159, 1155, 1152, 1150, 1151, 1155, 1158, 1154, 1150, 1150, 1138, 1125, 1118, 1108, 1104, 1107, 1111, 1114, 1120, 1129, 1140, 1146, 1152, 1158, 1168, 1174, 1184, 1184, 1180, 1169, 1160, 1153, 1141, 1123, 1118, 1101, 1080, 1078, 1066, 1046, 1044, 1030, 1025, 1037, 1042, 1060, 1068, 1074, 1084, 1098, 1107, 1112, 1116, 1114, 1127, 1150, 1174, 1187, 1199, 1210, 1227, 1248, 1272];

// from, to, colour
const stages = [
  [0, 2, '#fff'], [2, 3, '#ff8080'], [3, 8, '#f00'], [8, 11, '#0f0'], [11, 24, '#f00'], [24, 29, '#0f0'],
  [29, 32, '#fff'], [32, 33, '#ff8080'], [33, 47, '#f00'], [47, 50, '#0f0'], [50, 52, '#f00'], [52, 60, '#0f0'], [60, 67, '#fff']
];

const ticks = [
  ['14:51', 2, 'B', 1], ['14:51', 1, 'B', 1], ['14:51', 1, 'B', 1], ['14:52', 2, 'B', 1], ['14:52', 5, 'B', 1],
  ['14:53', 1, 'B', 1], ['14:53', 2, 'B', 1], ['14:54', 16, 'B', 3], ['14:55', 3, 'B', 1], ['14:55', 1, 'B', 1],
  ['14:55', 5, 'B', 1], ['14:55', 9, 'B', 2], ['14:55', 1, 'B', 1], ['14:56', 16, 'B', 2], ['14:56', 1, 'B', 1],
  ['14:56', 5, 'B', 1], ['14:57', 14, 'B', 2], ['15:00', 20, '', 8]
];

const months = [[461, '10'], [937, '11'], [1563, '12']];

function add(parent, tag, attrs, text) {
  const el = document.createElementNS(NS, tag);
  for (const key in attrs) el.setAttribute(key, attrs[key]);
  if (text) el.textContent = text;
  parent.appendChild(el);
  return el;
}

function line(parent, x1, y1, x2, y2, attrs) {
  return add(parent, 'line', Object.assign({ x1, y1, x2, y2 }, attrs));
}

function xAt(i) {
  return Math.round(FIRST_X + STEP * i);
}

function points(values, start = 0) {
  return values.map((y, i) => y === null ? '' : xAt(i + start) + ',' + y).join(' ');
}

function drawGrid(svg, axis, rows, top, bottom) {
  months.forEach(m => line(svg, m[0], top, m[0], bottom, { class: 'grid-line' }));
  rows.forEach(([y, label], i) => {
    line(svg, 2, y, 2117, y, { class: 'grid-line' });
    line(axis, 0, y, 9, y, { class: 'axis-tick' });
    if (i) {
      const mid = (y + rows[i - 1][0]) / 2;
      line(axis, 0, mid, 4, mid, { class: 'axis-tick' });
    }
    add(axis, 'text', { x: 91, y: y + 6, 'text-anchor': 'end' }, label);
  });
}

function drawCandle(svg, [type, high, top, bottom, low], i) {
  const x = xAt(i);
  const left = x - BODY / 2;
  if (type === 'h') {
    add(svg, 'rect', { x: left + 1, y: top, width: BODY - 2, height: bottom - top, fill: 'none', stroke: '#0000e0', 'stroke-width': 2, 'stroke-dasharray': '2 2' });
    line(svg, left, bottom, left + BODY, bottom, { stroke: '#0000ff', 'stroke-width': 2 });
    return;
  }
  const color = COLORS[type.toLowerCase()];
  if (high < top) line(svg, x, high, x, top, { stroke: color, 'stroke-width': 2 });
  if (low > bottom) line(svg, x, bottom, x, low, { stroke: color, 'stroke-width': 2 });
  if (type === 'r') {
    add(svg, 'rect', { x: left + 1, y: top, width: BODY - 2, height: bottom - top, fill: 'none', stroke: color, 'stroke-width': 2 });
  } else {
    add(svg, 'rect', { x: left, y: top, width: BODY, height: bottom - top, fill: color });
  }
}

function drawKline() {
  const svg = document.getElementById('kline');
  const axis = document.getElementById('klineAxis');
  const rows = [[212, '16.00'], [298, '15.00'], [382, '14.00'], [468, '13.00'], [554, '12.00'], [640, '11.00'], [726, '10.00'], [810, '9.00'], [896, '8.00']];
  drawGrid(svg, axis, rows, 175, 957);
  [874, 1141, 1202, 1620, 1798, 1858, 2006].forEach(x => add(svg, 'rect', { x, y: 173, width: 4, height: 4, fill: '#f0f' }));
  candles.forEach((c, i) => drawCandle(svg, c, i));
  line(svg, 1801, 480, 1801, 517, { stroke: '#0000ff', 'stroke-width': 2 });
  averages.forEach(([stroke, ys]) => add(svg, 'polyline', { points: points(ys), stroke, class: 'curve' }));
  line(svg, 0, 756, 2117, 756, { class: 'cross' });
  line(svg, 2017, 167, 2017, 979, { class: 'cross' });
  add(svg, 'path', { d: 'M1436 240L1413 232M1420 230h-7v10M36 888H14M20 881l-6 7 6 7', stroke: '#fff', 'stroke-width': 2, fill: 'none' });
  add(svg, 'text', { x: 1440, y: 253, class: 'mark' }, '15.77');
  add(svg, 'text', { x: 38, y: 897, class: 'mark' }, '8.11');
  add(svg, 'rect', { x: 684, y: 840, width: 1368, height: 137, fill: '#000' });
  add(axis, 'rect', { x: 0, y: 723, width: 100, height: 34, fill: '#303340' });
  add(axis, 'text', { x: 1, y: 747, class: 'mark' }, '9.64');
}

function drawIndicator(id, rows, shift, top, bottom) {
  const svg = document.getElementById(id);
  drawGrid(svg, document.getElementById(id + 'Axis'), rows, top + 9, bottom);
  stages.forEach(([from, to, stroke]) => {
    const part = ribbon.slice(from, to + 1).map(y => y + shift);
    add(svg, 'polyline', { points: points(part, from), stroke, class: 'ribbon' });
  });
  line(svg, 2017, top, 2017, bottom, { class: 'cross' });
}

function drawTimeAxis() {
  const svg = document.getElementById('timeAxis');
  [73, 578, 697, 817, 1090, 1249, 1405].forEach(x => line(svg, x, 1572, x, 1575, { class: 'axis-tick' }));
  add(svg, 'text', { x: 12, y: 1595 }, '2020年');
  months.forEach(([x, label]) => {
    line(svg, x - 2, 1572, x - 2, 1601, { class: 'axis-tick' });
    add(svg, 'text', { x, y: 1595 }, label);
  });
  add(svg, 'rect', { x: 1849, y: 1572, width: 169, height: 29, fill: '#303340' });
  add(svg, 'text', { x: 1850, y: 1593, class: 'mark' }, '2020/12/22/二');
}

drawKline();
drawIndicator('ind1', [[1050, '20.00'], [1112, '10.00'], [1172, '0.00']], 0, 1015, 1274);
drawIndicator('ind2', [[1346, '20.00'], [1406, '10.00'], [1466, '0.00']], 295, 1309, 1570);
add(document.getElementById('ind2'), 'text', { x: 2, y: 1561, class: 'note' }, '用到未来数据');
drawTimeAxis();

document.getElementById('ticks').innerHTML = ticks.map(t =>
  `<tr><td>${t[0]}</td><td class="green">8.70</td><td>${t[1]}</td><td>${t[2]}</td><td>${t[3]}</td></tr>`
).join('');
```
